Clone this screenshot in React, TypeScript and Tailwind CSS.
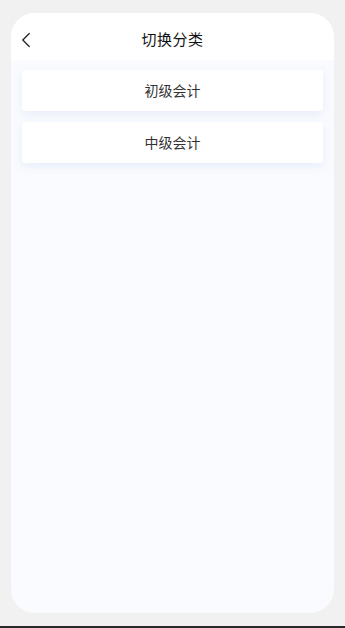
import { ChevronLeft } from 'lucide-react'

const categories = ['初级会计', '中级会计']

export default function App() {
  return (
    <div
      className="h-[628px] w-[345px] flex flex-col bg-[#f1f1f1] overflow-hidden"
      style={{ fontFamily: '"Noto Sans CJK SC", "Noto Sans", sans-serif' }}
    >
      <div className="flex-1 flex flex-col px-[11px] pt-[13px] pb-[13px]">
        <div className="flex-1 flex flex-col rounded-[24px] overflow-hidden bg-[#f9fbfe]">
          {/* header */}
          <div className="relative h-[47px] shrink-0 bg-white flex items-center justify-center pt-[6px]">
            <ChevronLeft className="absolute left-[2px] top-[14px] w-[26px] h-[26px] text-[#222]" strokeWidth={1.2} />
            <span className="text-[15px] text-[#111] tracking-[0.5px]">切换分类</span>
          </div>
          {/* list */}
          <div className="flex flex-col gap-[11px] px-[11px] pt-[10px]">
            {categories.map((c) => (
              <div
                key={c}
                className="h-[41px] bg-white rounded-[3px] flex items-center justify-center text-[14px] text-[#333] shadow-[0_3px_8px_rgba(180,200,235,0.25)]"
              >
                {c}
              </div>
            ))}
          </div>
        </div>
      </div>
      <div className="h-[2px] bg-[#2a2a2a] shrink-0" />
    </div>
  )
}
